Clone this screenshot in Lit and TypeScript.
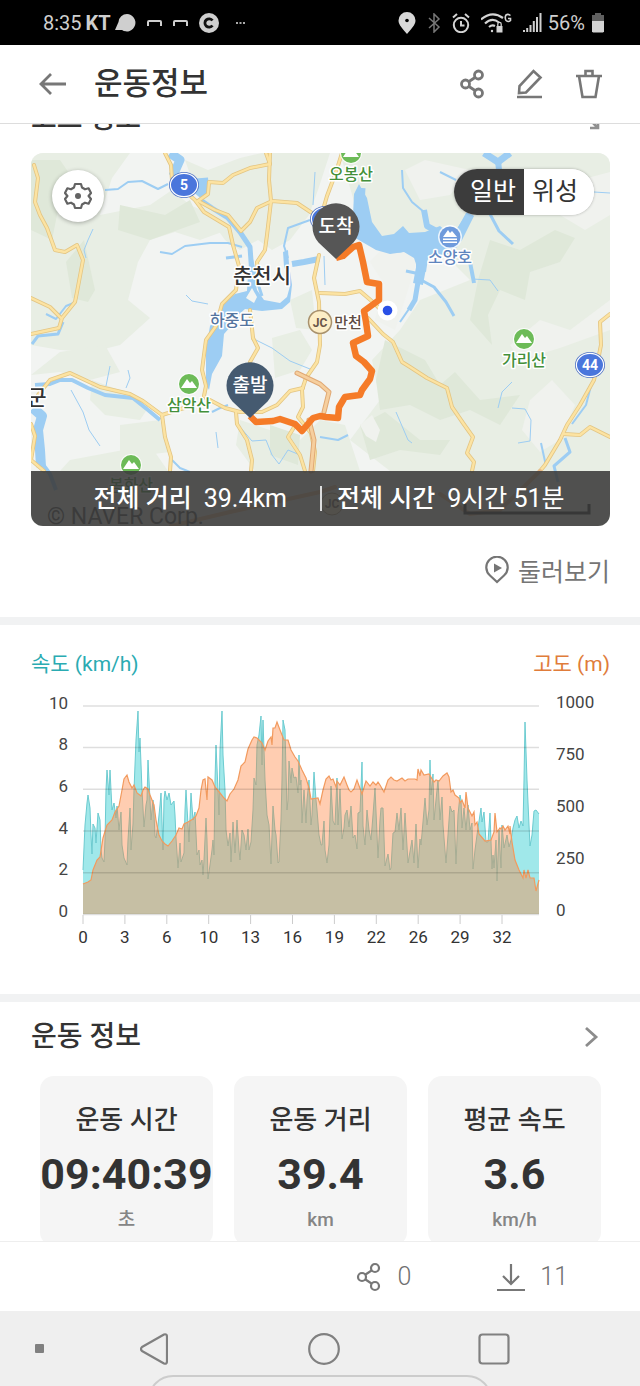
import { LitElement, html, css, svg } from "lit";
import { customElement, state } from "lit/decorators.js";

/* ---------- map data (map canvas units) ---------- */
const GREENS_LIGHT = [
  "31,153 130,153 112,178 100,215 150,205 172,190 190,205 215,216 222,232 200,240 175,232 150,240 138,262 128,300 150,318 120,345 92,352 60,350 31,345",
  "185,160 208,170 240,158 262,153 330,153 318,190 309,215 290,240 272,250 258,240 240,250 225,240 205,212 192,180",
  "340,153 610,153 610,471 390,471 350,440 380,400 372,360 400,330 420,300 470,280 440,250 380,240 355,205",
  "31,375 60,352 105,345 120,372 90,380 60,372",
  "92,380 125,392 150,405 140,420 105,415 90,400",
  "120,425 160,420 170,452 120,458",
  "70,460 150,445 168,471 60,471",
  "240,420 300,440 320,420 345,425 360,471 255,471 236,445",
  "272,338 300,330 312,350 300,370 275,378",
  "290,300 312,290 316,330 296,328",
];
const GREENS_DARK = [
  "31,160 60,160 78,186 60,200 52,240 31,230",
  "84,240 95,290 88,302 72,298 66,262",
  "490,240 520,250 555,230 575,238 560,262 530,272 525,300 500,290 488,315 492,345 470,320 478,280",
  "385,340 425,360 440,385 455,372 480,400 520,395 500,425 470,410 440,420 410,405 380,410 376,380",
  "270,425 300,435 298,465 270,455",
  "360,425 385,412 420,440 450,440 440,455 400,450 370,460",
  "120,205 165,215 190,200 200,222 150,240 118,230",
];
const PALES = [
  "390,240 420,250 408,290 395,330 375,320 385,285 370,262",
  "520,360 560,348 610,330 610,300 570,330 540,320 510,345",
  "530,400 552,380 575,405 560,440 540,452 522,430",
  "580,180 610,172 610,215 585,230 560,215",
  "425,160 470,170 450,195 420,200 405,170",
  "360,425 372,415 380,430 376,442 366,436",
];
const RIVERS: [string, number][] = [
  ["M199 199 L212 208 L228 218 L240 232 L250 247 L252 275", 5],
  ["M250 253 L256 278 L262 296", 3],
  ["M292 264 L304 262 L319 259", 6],
  ["M105 190 L118 189 L128 182 L142 181 L158 189 L168 184", 2],
  ["M170 153 L180 160 L173 176", 9],
  ["M202 178 L203 190 L198 196", 12],
  ["M160 252 L172 254 L185 246 L210 243 L228 243 L242 247", 2],
  ["M226 258 L242 256", 3],
  ["M93 229 L88 240 L84 250 L86 258", 1],
  ["M186 295 L192 301 L208 304", 1],
  ["M46 314 L56 319 L66 306 L76 302", 2],
  ["M32 344 L38 336 L58 334 L63 322", 3],
  ["M35 385 L50 384 L60 380 L72 380 L88 388 L105 395 L133 398 L148 410 L160 420", 4],
  ["M71 390 L83 412 L89 430 L100 446", 1],
  ["M110 366 L106 386", 1],
  ["M126 388 L130 378 L128 370", 1],
  ["M33 408 L42 416 L38 430 L40 450 L41 467", 10],
  ["M41 462 L50 474 L56 490", 4],
  ["M172 460 L180 468 L190 472", 2],
  ["M256 340 L272 348 L290 361 L310 369", 1],
  ["M216 432 L218 448", 1],
  ["M240 427 L252 441 L266 440 L272 455 L279 464 L288 450 L300 455", 1],
  ["M212 412 L220 408 L228 405", 2],
  ["M288 258 L284 246 L288 228 L310 220", 2],
  ["M315 172 L313 205", 1],
  ["M324 256 L325 285", 1],
  ["M362 188 L361 204 L365 220 L362 232", 7],
  ["M362 230 L378 244 L400 247 L412 240 L432 240", 11],
  ["M425 243 L436 250 L452 244 L460 232 L470 214", 8],
  ["M421 244 L421 268 L418 284", 10],
  ["M418 282 L415 300 L409 310", 5],
  ["M411 306 L400 322", 2],
  ["M421 280 L434 287 L446 302 L454 316", 3],
  ["M406 271 L420 274", 3],
  ["M402 170 L403 188 L412 202 L424 212", 2],
  ["M424 210 L427 226 L442 234 L450 238", 6],
  ["M484 153 L498 162 L510 153", 7],
  ["M498 160 L499 170", 6],
  ["M490 214 L499 231 L513 244", 3],
  ["M440 172 L456 180", 2],
  ["M470 262 L474 283", 4],
  ["M472 279 L490 280 L498 291", 1],
  ["M594 192 L610 193", 1],
  ["M512 382 L502 392 L498 408", 1],
  ["M512 408 L525 409 L531 420 L530 441 L518 443", 1],
  ["M541 443 L546 466", 2],
  ["M592 382 L586 405 L572 424", 2],
  ["M565 438 L570 452 L554 466 L558 482", 3],
  ["M396 412 L408 440 L412 443", 1],
  ["M320 437 L338 440 L348 435", 2],
];
const ROADS = [
  "M34 165 L38 178 L35 202 L40 215 L47 228 L55 250 L65 252 L77 245 L83 260 L77 292 L75 302 L62 318 L59 328 L31 334",
  "M31 298 L50 307 L61 318",
  "M165 153 L171 165 L172 180 L195 200 L204 212 L229 227 L233 245 L239 266 L236 290 L222 304 L216 326 L206 340 L202 370 L206 386 L204 396",
  "M198 201 L208 194 L209 182 L223 183 L233 175 L250 168 L270 164 L266 153",
  "M200 202 L215 210 L228 215 L241 231 L250 222 L257 208 L272 201 L297 203 L312 213",
  "M270 153 L269 180 L271 201 L267 235 L265 250 L257 262 L258 272",
  "M319 255 L314 278 L319 302 L320 345 L317 362 L306 378 L302 390 L303 407 L298 417 L311 433 L315 452 L313 471",
  "M38 395 L50 380 L70 373 L100 387 L130 394 L143 401 L162 415 L165 437 L171 457 L170 471",
  "M162 415 L184 408",
  "M206 398 L225 408 L240 412 L262 412 L277 405 L290 391 L303 388",
  "M236 412 L237 424 L247 440 L252 460 L251 471",
  "M342 153 L336 172 L327 196 L320 220",
  "M253 338 L258 348 L250 362",
  "M320 293 L345 294 L360 291 L374 303 L384 313",
  "M250 310 L253 338",
  "M368 318 L383 334 L393 342 L402 362 L410 367 L427 378 L447 388 L452 407 L463 423 L473 437 L467 453 L474 462 L472 471",
  "M610 314 L600 322 L601 345 L594 380 L580 405 L567 425 L560 440 L545 465 L540 471",
  "M564 434 L580 435 L590 427 L610 437",
  "M296 424 L288 437 L300 455 L305 471",
  "M31 424 L35 436 L31 460 L44 471",
];
const ROUTE =
  "M336 258 L343 256 L353 247 L359 245 L363 262 L367 282 L379 284 L379 300 L364 311 L366 322 L368 336 L353 343 L356 356 L364 362 L372 371 L370 379 L362 390 L360 395 L345 397 L339 407 L338 418 L326 417 L320 416 L313 418 L302 431 L295 424 L280 419 L273 421 L256 422 L250 416";

/* ---------- chart data (chart canvas units) ---------- */
const SPEED =
  "83,870 85,825 87,803 88,795 90,808 91,835 92,854 93,824 95,828 96,843 98,813 100,820 101,850 102,858 104,862 105,840 106,790 107,770 109,795 110,770 112,810 114,803 116,818 117,806 119,830 121,812 122,845 124,858 127,865 128,840 130,808 131,850 133,824 134,790 136,740 138,711 139,752 140,738 142,790 144,827 146,805 147,800 148,760 150,800 151,820 153,800 154,815 155,836 156,838 158,825 160,805 161,793 163,850 164,800 165,791 167,800 169,793 171,805 174,801 175,815 176,838 178,868 180,843 181,862 184,853 185,810 186,790 189,842 191,793 193,820 195,812 197,855 199,850 200,865 202,860 203,875 204,860 206,818 207,840 208,879 210,865 212,850 213,840 214,855 215,780 216,745 218,790 219,815 220,750 222,711 223,755 225,790 226,830 228,846 230,833 231,862 233,822 235,853 237,820 239,850 240,860 242,830 244,835 246,850 248,829 249,850 251,842 253,810 254,778 256,785 257,745 259,735 261,716 262,765 263,720 265,780 267,815 269,825 270,845 271,864 273,806 275,830 276,835 278,863 279,862 281,820 282,780 283,720 285,730 287,810 288,800 289,761 291,783 292,768 294,778 296,777 298,793 299,755 300,785 301,780 302,823 304,790 306,823 307,800 309,780 311,825 312,815 314,772 316,800 317,810 319,835 321,845 322,845 324,821 325,850 327,863 329,845 331,786 333,821 335,825 337,778 338,825 340,789 342,839 344,828 345,815 347,810 349,827 351,806 353,838 355,835 357,849 358,813 360,812 362,762 363,826 365,845 367,810 369,830 371,840 373,815 375,788 378,858 380,820 381,808 383,808 385,866 388,854 390,870 391,868 393,833 395,832 397,813 399,830 401,808 403,850 405,813 408,863 412,840 414,863 416,824 418,868 420,839 421,845 423,822 425,798 427,825 429,810 430,760 431,795 433,774 434,820 436,800 438,780 440,820 442,797 443,825 444,838 446,863 448,835 450,806 452,812 454,810 456,864 458,815 460,795 461,800 462,828 464,808 466,830 468,805 470,830 472,823 473,869 475,850 477,835 478,828 481,808 482,822 484,812 486,842 488,842 490,813 492,869 493,855 494,868 496,840 497,881 499,830 501,868 502,825 504,848 507,835 509,847 511,840 513,828 515,820 517,816 519,828 521,821 523,826 524,780 525,722 527,780 529,825 530,846 532,835 534,811 536,810 539,814";
const ELEVATION =
  "83,884 88,882 91,880 93,870 97,860 100,857 103,838 107,825 112,820 115,812 119,806 122,790 124,779 127,775 129,782 132,788 134,785 137,793 141,796 143,790 145,787 148,789 150,795 154,805 156,820 159,835 162,841 165,844 168,846 172,841 176,835 179,828 182,829 184,824 188,822 193,819 196,816 199,808 201,790 203,780 205,779 207,800 208,777 212,780 215,787 220,793 224,798 227,801 230,794 234,789 238,780 241,766 245,762 248,749 252,740 254,737 257,738 260,741 262,743 265,750 268,741 271,737 272,745 273,728 275,728 277,722 280,730 284,740 288,740 291,750 295,757 298,761 302,770 306,778 309,788 311,799 318,798 320,804 323,790 326,779 329,776 331,780 333,779 336,787 337,781 340,785 344,777 347,785 349,790 351,792 354,789 357,780 362,794 366,781 370,786 373,782 376,785 378,782 380,785 384,792 388,780 391,777 394,780 397,781 402,778 405,781 408,779 415,779 417,780 418,769 420,776 421,770 424,775 429,774 434,782 436,780 439,781 443,776 447,773 449,777 451,792 453,790 455,795 459,798 460,803 462,800 465,808 466,792 468,808 472,816 474,812 475,825 477,822 479,834 485,841 491,840 494,832 495,813 497,832 500,828 501,829 503,826 505,830 508,826 510,834 510,826 512,842 515,860 519,870 523,878 524,870 526,878 528,870 530,878 534,878 536,891 539,880";

const SHARE = svg`<circle cx="5.5" cy="14" r="4"/><circle cx="18.5" cy="5" r="4"/><circle cx="18.5" cy="23" r="4"/><path d="M9 11.5 15 7.5M9 16.5 15 20.5"/>`;

@customElement("course-map")
export class CourseMap extends LitElement {
  @state() private satellite = false;

  static styles = css`
    :host {
      display: block;
      position: relative;
      border-radius: 12px;
      overflow: hidden;
      font-family: Roboto, "Noto Sans CJK KR", sans-serif;
    }
    .canvas {
      display: block;
      width: 100%;
      height: auto;
      background: #f2f4f2;
    }
    .label {
      text-anchor: middle;
      font-size: 16px;
      font-weight: 500;
      stroke: #fff;
      stroke-width: 3px;
      paint-order: stroke;
      stroke-linejoin: round;
    }
    .city { font-size: 21px; fill: #333; }
    .water { fill: #55759f; }
    .lake { fill: #5f85be; }
    .peak { fill: #43903a; }
    .junction { fill: #5d4c42; font-size: 15px; }
    .pin { text-anchor: middle; font-size: 19px; font-weight: 500; fill: #fff; }
    .shield { text-anchor: middle; font-size: 14px; font-weight: 700; fill: #fff; }
    .jc { text-anchor: middle; font-size: 12px; font-weight: 700; fill: #6a5548; }
    .credit { font-size: 23px; fill: #444; }
    .gear {
      position: absolute;
      left: 21px;
      top: 17px;
      width: 52px;
      height: 52px;
      padding: 0;
      border: 0;
      border-radius: 50%;
      background: #fff;
      box-shadow: 0 1px 4px rgba(0, 0, 0, 0.3);
      display: grid;
      place-items: center;
    }
    .types {
      position: absolute;
      right: 16px;
      top: 16px;
      display: flex;
      height: 46px;
      border-radius: 23px;
      overflow: hidden;
      background: #fff;
      box-shadow: 0 0 3px rgba(0, 0, 0, 0.3);
    }
    .types button {
      width: 70px;
      padding: 0;
      border: 0;
      background: #fff;
      color: #333;
      font-family: inherit;
      font-size: 25px;
      line-height: 46px;
    }
    .types button:first-child { padding-left: 8px; }
    .types button:last-child { padding-right: 8px; }
    .types button.on { background: #3c3c3c; color: #fff; }
    .totals {
      position: absolute;
      left: 0;
      right: 0;
      bottom: 0;
      height: 55px;
      display: grid;
      grid-template-columns: 1fr 2px 1fr;
      align-items: center;
      justify-items: center;
      padding: 0 30px;
      background: rgba(58, 58, 58, 0.88);
      color: #fff;
      box-sizing: border-box;
      white-space: nowrap;
    }
    .total { display: flex; align-items: baseline; gap: 12px; font-size: 25px; line-height: 36px; }
    .total b { font-weight: 500; }
    .bar { width: 2px; height: 25px; background: #ddd; }
  `;

  private peak(x: number, y: number, name: string, ny: number) {
    return svg`<circle cx=${x} cy=${y} r="11" fill="#fff" opacity=".8"/>
      <circle cx=${x} cy=${y} r="10" fill="#6dbb58"/>
      <path transform="translate(${x} ${y})" d="M-8 4 L-2 -5 L1 -1 L3 -3 L8 4 Z" fill="#fff"/>
      <text class="label peak" x=${x} y=${ny}>${name}</text>`;
  }

  private shield(x: number, y: number, n: string) {
    return svg`<ellipse cx=${x} cy=${y} rx="15" ry="13" fill="#4f72c4"/>
      <ellipse cx=${x} cy=${y} rx="13.6" ry="11.6" fill="#4a76dc" stroke="#fff" stroke-width="1.2"/>
      <text class="shield" x=${x} y=${y + 5}>${n}</text>`;
  }

  private pin(x: number, y: number, color: string, name: string) {
    return svg`<path transform="translate(${x} ${y})" fill=${color}
        d="M0 32 L-17.500 15.500 A23.500 23.500 0 1 1 17.500 15.500 Z"/>
      <text class="pin" x=${x} y=${y + 6}>${name}</text>`;
  }

  render() {
    return html`
      <svg class="canvas" viewBox="31 153 579 373" role="img" aria-label="코스 지도">
        ${GREENS_LIGHT.map((p) => svg`<polygon points=${p} fill="#e8eee4"/>`)}
        ${GREENS_DARK.map((p) => svg`<polygon points=${p} fill="#dfe8d9"/>`)}
        ${PALES.map((p) => svg`<polygon points=${p} fill="#f0f2ee"/>`)}
        <rect x="31" y="471" width="579" height="55" fill="#e9eee6" />
        <g fill="none" stroke="#9dcdf3" stroke-linejoin="round">
          ${RIVERS.map(([d, w]) => svg`<path d=${d} stroke-width=${w}/>`)}
        </g>
        <path fill="#9dcdf3" d="M222 304 L235 294 L247 291 L248 274 L254 274 L257 290 L264 300 L280 303 L287 297 L290 286 L284 266 L283 252 L288 250 L289 264 L292 285 L290 302 L282 309 L262 311 L245 309 L236 317 L231 326 L224 334 L222 356 L212 374 L209 390 L206 384 L206 350 L210 326 L216 318 Z" />
        <path fill="#f3f5f2" d="M246 298 L252 288 L257 297 L254 303 Z" />
        <path fill="#9dcdf3" d="M354 194 L359 184 L367 198 L372 222 L382 236 L394 234 L403 226 L409 233 L425 232 L440 226 L452 236 L468 212 L474 216 L462 240 L450 256 L438 254 L428 258 L426 272 L418 270 L414 258 L404 252 L390 254 L376 250 L352 236 Z" />
        <g fill="none" stroke-linejoin="round" stroke-linecap="round">
          <g stroke="#e3c583" stroke-width="4">${ROADS.map((d) => svg`<path d=${d}/>`)}</g>
          <g stroke="#fce3a2" stroke-width="2.400">${ROADS.map((d) => svg`<path d=${d}/>`)}</g>
          <path d="M297 373 L320 384 L329 392 L324 412 M309 420 L314 440 L311 471" stroke="#e0a874" stroke-width="5" />
          <path d="M297 373 L320 384 L329 392 L324 412 M309 420 L314 440 L311 471" stroke="#f6cf9e" stroke-width="3" />
          <path d="M171 526 L230 512 L320 492 L335 487 M440 494 L470 514 L500 510 L540 471" stroke="#e8b888" stroke-width="4" />
        </g>
        ${this.peak(351, 153, "오봉산", 180)}
        ${this.peak(189, 384, "삼악산", 411)}
        ${this.peak(131, 465, "봉화산", 491)}
        ${this.peak(524, 339, "가리산", 366)}
        <circle cx="450" cy="237" r="12" fill="#fff" opacity=".8" />
        <circle cx="450" cy="237" r="10.500" fill="#6f9bdc" />
        <path d="M443 237 L448 230 L450 233 L452 231 L457 237 Z M443 238.500 h14 v1.500 h-14 Z M443 241.500 h14 v1.500 h-14 Z" fill="#fff" />
        <text class="label lake" x="450" y="263">소양호</text>
        <text class="label city" x="262" y="283">춘천시</text>
        <text class="label water" x="232" y="326" font-size="17">하중도</text>
        <text class="label city" x="37" y="405">군</text>
        ${this.shield(184, 185, "5")} ${this.shield(590, 365, "44")} ${this.shield(325, 219, "")}
        <circle cx="320" cy="322" r="11.500" fill="#fdeec6" stroke="#a8916c" stroke-width="1.500" />
        <text class="jc" x="320" y="327">JC</text>
        <text class="label junction" x="348" y="328">만천</text>
        <circle cx="332" cy="504" r="11" fill="#fdeec6" stroke="#a8916c" />
        <text class="jc" x="332" y="508">JC</text>
        <text class="credit" x="47" y="524">© NAVER Corp.</text>
        <path d="M465 504 V513 H589 V504" fill="none" stroke="#222" stroke-width="3" />
        <path d=${ROUTE} fill="none" stroke="#f57b28" stroke-width="6.500" stroke-linejoin="round" />
        ${this.pin(336, 227, "#565656", "도착")} ${this.pin(250, 386, "#455a70", "출발")}
        <circle cx="387.500" cy="310.500" r="10" fill="#fff" />
        <circle cx="387.500" cy="310.500" r="4.800" fill="#2a50e6" />
      </svg>
      <button class="gear" aria-label="지도 설정">
        <svg width="28" height="28" viewBox="0 0 28 28" fill="none" stroke="#636363" stroke-width="2.200" stroke-linejoin="round">
          <path d="M11 2 h6 l1 3.500 l3 1.800 l3.600 -1 l2.400 4.700 l-2.400 3 l2.400 3 l-2.400 4.700 l-3.600 -1 l-3 1.800 l-1 3.500 h-6 l-1 -3.500 l-3 -1.800 l-3.600 1 l-2.400 -4.700 l2.400 -3 l-2.400 -3 l2.400 -4.700 l3.600 1 l3 -1.800 Z" />
          <circle cx="14" cy="14" r="3" fill="#636363" stroke="none" />
        </svg>
      </button>
      <div class="types" role="group" aria-label="지도 종류">
        <button class=${this.satellite ? "" : "on"} aria-pressed=${!this.satellite} @click=${() => (this.satellite = false)}>일반</button>
        <button class=${this.satellite ? "on" : ""} aria-pressed=${this.satellite} @click=${() => (this.satellite = true)}>위성</button>
      </div>
      <div class="totals">
        <span class="total"><b>전체 거리</b><span>39.4km</span></span>
        <span class="bar"></span>
        <span class="total"><b>전체 시간</b><span>9시간 51분</span></span>
      </div>
    `;
  }
}

@customElement("speed-chart")
export class SpeedChart extends LitElement {
  static styles = css`
    :host { display: block; font-family: Roboto, "Noto Sans CJK KR", sans-serif; }
    .legend { display: flex; justify-content: space-between; font-size: 21px; line-height: 30px; }
    .speed { color: #2aabb2; }
    .elevation { color: #e07c3a; }
    .plot { display: block; width: 100%; height: auto; margin-top: 11px; }
    .tick { font-size: 17px; fill: #444; }
    .end { text-anchor: end; }
    .mid { text-anchor: middle; fill: #333; }
  `;

  render() {
    const rows = [706, 747.6, 789.3, 831, 872.7, 914.5];
    const distances = [0, 3, 6, 10, 13, 16, 19, 22, 26, 29, 32];
    return html`
      <div class="legend"><span class="speed">속도 (km/h)</span><span class="elevation">고도 (m)</span></div>
      <svg class="plot" viewBox="31 690 579 260" role="img" aria-label="속도와 고도 그래프">
        <polygon points="83,914 ${SPEED} 539,914" fill="#a0e8ea" />
        <polyline points=${SPEED} fill="none" stroke="#6ccbd0" stroke-width="1" />
        <polygon points="83,914 ${ELEVATION} 539,914" fill="rgb(255,130,60)" fill-opacity=".4" />
        <polyline points=${ELEVATION} fill="none" stroke="#f29a5e" stroke-width="1.200" />
        ${rows.map((y) => svg`<path d="M83 ${y} H539" stroke="#000" stroke-opacity=".13" stroke-width="1.500"/>`)}
        ${rows.map((y, i) => svg`<text class="tick end" x="68" y=${y + 2.5}>${10 - i * 2}</text>`)}
        ${[1000, 750, 500, 250, 0].map((v, i) => svg`<text class="tick" x="556" y=${708 + i * 52}>${v}</text>`)}
        ${distances.map(
          (v, i) => svg`<path d="M${83 + i * 41.9} 915 V924" stroke="#ccc"/>
            <text class="tick mid" x=${83 + i * 41.9} y="943">${v}</text>`
        )}
      </svg>
    `;
  }
}

@customElement("app-root")
export class AppRoot extends LitElement {
  static styles = css`
    :host {
      display: flex;
      flex-direction: column;
      height: 100vh;
      background: #fff;
      color: #333;
      font-family: Roboto, "Noto Sans CJK KR", sans-serif;
    }
    button { padding: 0; border: 0; background: none; font: inherit; color: inherit; display: flex; }
    .status {
      flex: none;
      display: flex;
      justify-content: space-between;
      height: 45px;
      padding: 0 35px 0 43px;
      background: #000;
      color: #cfcfcf;
      font-size: 20px;
    }
    .group { display: flex; align-items: center; gap: 11px; }
    .clock { display: flex; align-items: center; gap: 4px; }
    .tight { display: flex; align-items: center; gap: 6px; }
    .top {
      flex: none;
      display: flex;
      align-items: center;
      height: 78px;
      padding: 0 37px 0 38px;
      border-bottom: 1px solid #ddd;
    }
    .top h1 { flex: 1; margin: 0 0 0 27px; font-size: 31px; font-weight: 500; line-height: 40px; }
    .actions { display: flex; gap: 31px; }
    .scroll { flex: 1; min-height: 0; overflow-y: auto; scrollbar-width: none; }
    .section { padding: 15px 30px 0 31px; border-bottom: 8px solid #f1f2f3; }
    .head { display: flex; align-items: center; justify-content: space-between; height: 40px; padding-right: 10px; }
    .head h2 { margin: 0; font-size: 28px; font-weight: 500; line-height: 40px; }
    .course-map { margin-top: 14px; }
    .tour { display: flex; justify-content: flex-end; padding: 24px 0 27px; }
    .tour button { align-items: center; gap: 9px; height: 40px; font-size: 25px; color: #757575; }
    .chart { padding-top: 24px; padding-bottom: 44px; }
    .cards { display: grid; grid-template-columns: repeat(3, 1fr); gap: 21px; padding: 19px 9px 32px; }
    .card {
      display: flex;
      flex-direction: column;
      align-items: center;
      height: 170px;
      padding-top: 24px;
      box-sizing: border-box;
      border-radius: 14px;
      background: #f5f5f5;
      white-space: nowrap;
    }
    .name { font-size: 26px; font-weight: 500; line-height: 40px; }
    .value { font-size: 43px; font-weight: 700; line-height: 68px; }
    .unit { font-size: 19px; font-weight: 500; line-height: 24px; color: #858585; }
    .counts {
      flex: none;
      display: flex;
      align-items: center;
      justify-content: flex-end;
      gap: 86px;
      height: 69px;
      padding: 0 72px 0 0;
      border-top: 1px solid #eee;
      font-size: 25px;
      font-weight: 300;
      color: #707070;
    }
    .counts button { align-items: center; gap: 15px; }
    .nav {
      position: relative;
      flex: none;
      display: grid;
      grid-template-columns: 69px repeat(3, 1fr) 61px;
      align-items: center;
      justify-items: center;
      height: 75px;
      background: #efefef;
      overflow: hidden;
    }
    .dot { width: 9px; height: 9px; margin-left: 10px; border-radius: 1px; background: #808080; }
    .pill {
      position: absolute;
      left: 148px;
      right: 148px;
      top: 64px;
      height: 50px;
      border: 2px solid #ccc;
      border-radius: 26px;
      box-sizing: border-box;
    }
  `;

  firstUpdated() {
    const scroller = this.renderRoot.querySelector(".scroll") as HTMLElement;
    requestAnimationFrame(() => (scroller.scrollTop = 40));
  }

  private card(name: string, value: string, unit: string) {
    return html`<div class="card"><span class="name">${name}</span><span class="value">${value}</span><span class="unit">${unit}</span></div>`;
  }

  private statusBar() {
    return html`
      <div class="status">
        <div class="group">
          <div class="clock">
            <span>8:35</span><b>KT</b>
            <svg width="21" height="20" viewBox="0 0 21 20" fill="#cfcfcf"><path d="M12 1 a8.700 8.700 0 1 1 -5 16 L0 17 L3.500 9 A8.700 8.700 0 0 1 12 1 Z" /></svg>
          </div>
          <svg width="15" height="8" viewBox="0 0 15 8" fill="none" stroke="#cfcfcf" stroke-width="2"><path d="M1 7 V3 Q1 2 2 2 H13 Q14 2 14 3 V7" /></svg>
          <svg width="15" height="8" viewBox="0 0 15 8" fill="none" stroke="#cfcfcf" stroke-width="2"><path d="M1 7 V3 Q1 2 2 2 H13 Q14 2 14 3 V7" /></svg>
          <svg width="20" height="20" viewBox="0 0 20 20"><circle cx="10" cy="10" r="10" fill="#cfcfcf" /><path d="M13.500 7.500 A4.200 4.200 0 1 0 13.500 12.500" fill="none" stroke="#111" stroke-width="2.800" /></svg>
          <svg width="16" height="8" viewBox="0 0 16 8" fill="#aaa"><path d="M6 3h2v2h-2zM9.500 3h2v2h-2zM13 3h2v2h-2z" /></svg>
        </div>
        <div class="group">
          <svg width="18" height="22" viewBox="0 0 18 22"><path d="M9 0 A8.500 8.500 0 0 1 17.500 8.500 C17.500 13 13 17 9 22 C5 17 .5 13 .5 8.500 A8.500 8.500 0 0 1 9 0 Z" fill="#d8d8d8" /><circle cx="9" cy="8.500" r="1.800" /></svg>
          <svg width="14" height="20" viewBox="0 0 14 20" fill="none" stroke="#777" stroke-width="1.500"><path d="M2 5 L12 14 L7 19 V1 L12 6 L2 15" /></svg>
          <svg width="18" height="20" viewBox="0 0 18 20" fill="none" stroke="#d4d4d4" stroke-width="2"><circle cx="9" cy="12" r="7.200" /><path d="M9 8 V12.500 H12.500 M1 4.500 L5 1 M17 4.500 L13 1" /></svg>
          <svg width="31" height="20" viewBox="0 0 31 20" fill="none" stroke="#d4d4d4" stroke-width="2.200">
            <path d="M0 6.500 Q11 -3 22 5 M4 10.500 Q11 4 18 9.500 M8 14 Q11 11.500 14 13" /><circle cx="11" cy="18" r="1.200" fill="#d4d4d4" stroke="none" />
            <path d="M15.500 13 h6 v6.500 h-6 Z" fill="#d4d4d4" stroke="none" /><path d="M16.800 13 V11 a1.700 1.700 0 0 1 3.400 0 V13" stroke-width="1.300" />
            <path d="M29.500 2.500 Q27 .5 25 2 Q23.500 4.500 25 7.500 Q27.500 9.500 29.500 7.500 V5.500 H27" stroke-width="1.600" />
          </svg>
          <div class="tight">
            <svg width="19" height="19" viewBox="0 0 19 19" fill="#d0d0d0"><path d="M0 17h2v2h-2zM3.200 15h2v4h-2zM6.500 12h2v7h-2zM9.800 8h2v11h-2zM13 4h2v15h-2zM16.500 0h2v19h-2z" /></svg>
            <span>56%</span>
            <svg width="14" height="20" viewBox="0 0 14 20"><path d="M4 0h6v2h3v6H1V2h3z" fill="#606060" /><path d="M1 8h12v10.500l-1 1H2l-1-1z" fill="#d4d4d4" /></svg>
          </div>
        </div>
      </div>
    `;
  }

  render() {
    return html`
      ${this.statusBar()}
      <header class="top">
        <button aria-label="뒤로">
          <svg width="29" height="24" viewBox="0 0 29 24" fill="none" stroke="#777" stroke-width="2.800"><path d="M28 12 H3 M13 2 L3 12 L13 22" /></svg>
        </button>
        <h1>운동정보</h1>
        <div class="actions">
          <button aria-label="공유"><svg width="26" height="30" viewBox="-1 -1 26 30" fill="none" stroke="#777" stroke-width="2.800">${SHARE}</svg></button>
          <button aria-label="편집"><svg width="28" height="30" viewBox="0 0 28 30" fill="none" stroke="#777" stroke-width="2.600"><path d="M1 28 H26 M3 24 L3.500 17 L17.500 2 L24.500 8.500 L10 23.500 Z" /></svg></button>
          <button aria-label="삭제"><svg width="28" height="30" viewBox="0 0 28 30" fill="none" stroke="#777" stroke-width="2.600"><path d="M1 7 H27 M4 7 L7.500 28 H20.500 L24 7 M10.500 7 V2 H17.500 V7" /></svg></button>
        </div>
      </header>
      <main class="scroll">
        <section class="section">
          <div class="head">
            <h2>코스 정보</h2>
            <button aria-label="지도 확대"><svg width="22" height="22" viewBox="0 0 22 22" fill="none" stroke="#909090" stroke-width="2.600"><path d="M2 9 V2 H9 M2 2 L20 20 M20 12 V20 H12" /></svg></button>
          </div>
          <course-map class="course-map"></course-map>
          <div class="tour">
            <button>
              <svg width="24" height="28" viewBox="0 0 24 28" fill="none" stroke="#757575" stroke-width="2.200"><path d="M12 26 L5 19.500 A10.700 10.700 0 1 1 19 19.500 Z" /><path d="M9 7.500 L17 12 L9 16.500 Z" fill="#757575" stroke="none" /></svg>
              둘러보기
            </button>
          </div>
        </section>
        <section class="section chart"><speed-chart></speed-chart></section>
        <section class="section">
          <div class="head">
            <h2>운동 정보</h2>
            <button aria-label="운동 정보 더보기"><svg width="18" height="22" viewBox="0 0 18 22" fill="none" stroke="#8c8c8c" stroke-width="2.800"><path d="M4 2 L14 11 L4 20" /></svg></button>
          </div>
          <div class="cards">
            ${this.card("운동 시간", "09:40:39", "초")} ${this.card("운동 거리", "39.4", "km")} ${this.card("평균 속도", "3.6", "km/h")}
          </div>
        </section>
      </main>
      <div class="counts">
        <button aria-label="공유 수"><svg width="27" height="30" viewBox="-1 -1 26 30" fill="none" stroke="#777" stroke-width="2.200">${SHARE}</svg>0</button>
        <button aria-label="다운로드 수"><svg width="28" height="30" viewBox="0 0 28 30" fill="none" stroke="#777" stroke-width="2.200"><path d="M0 28 H28 M14 2 V22 M6 14 L14 22 L22 14" /></svg>11</button>
      </div>
      <nav class="nav" aria-label="시스템 탐색">
        <span class="dot"></span>
        <button aria-label="이전"><svg width="28" height="32" viewBox="0 0 28 32" fill="none" stroke="#808080" stroke-width="2.200" stroke-linejoin="round"><path d="M24 1.500 Q27 .5 27 4 V28 Q27 31.500 24 30.500 L2 18 Q0 16 2 14 Z" /></svg></button>
        <button aria-label="홈"><svg width="32" height="32" viewBox="0 0 32 32" fill="none" stroke="#808080" stroke-width="2.200"><circle cx="16" cy="16" r="14.800" /></svg></button>
        <button aria-label="최근 앱"><svg width="32" height="32" viewBox="0 0 32 32" fill="none" stroke="#808080" stroke-width="2.200"><rect x="1.500" y="1.500" width="29" height="29" rx="3" /></svg></button>
        <span class="pill"></span>
      </nav>
    `;
  }
}
